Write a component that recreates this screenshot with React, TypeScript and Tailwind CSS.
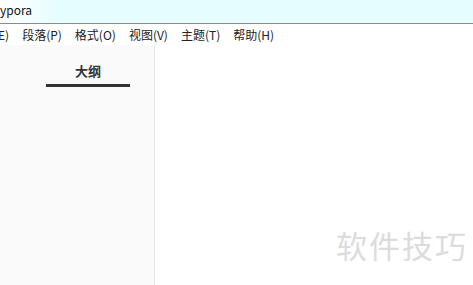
import React from "react";

export default function App() {
  const menus = ["E)", "段落(P)", "格式(O)", "视图(V)", "主题(T)", "帮助(H)"];
  return (
    <div
      className="w-[473px] h-[285px] overflow-hidden bg-white flex flex-col relative"
      style={{ fontFamily: '"Microsoft YaHei", "Noto Sans CJK SC", "Noto Sans", sans-serif' }}
    >
      <div className="h-[24px] shrink-0 bg-gradient-to-r from-white from-[0%] via-[#e6fdff] via-[12%] to-[#e6fdff] border-b border-[#8a8a8a] flex items-center">
        <span className="text-[12px] text-[#111] leading-none -mt-[3px]">ypora</span>
      </div>
      <div className="h-[21px] shrink-0 flex items-center gap-[13px] text-[12px] text-[#222] leading-none -ml-[2px] pt-[1px]">
        {menus.map((m) => (
          <span key={m}>{m}</span>
        ))}
      </div>
      <div className="flex flex-1 min-h-0">
        <div className="w-[155px] shrink-0 bg-[#fafafa] border-r border-[#e6e6e6] flex flex-col items-center pl-[22px] pt-[19px]">
          <div className="text-[13px] font-bold text-[#333] leading-none">大纲</div>
          <div className="w-[84px] h-[3px] bg-[#333] mt-[7px]"></div>
        </div>
        <div className="flex-1 bg-white"></div>
      </div>
      <div className="absolute left-[336px] top-[229px] text-[31px] text-[#dcdcdc] leading-none tracking-[2px]">
        软件技巧
      </div>
    </div>
  );
}
